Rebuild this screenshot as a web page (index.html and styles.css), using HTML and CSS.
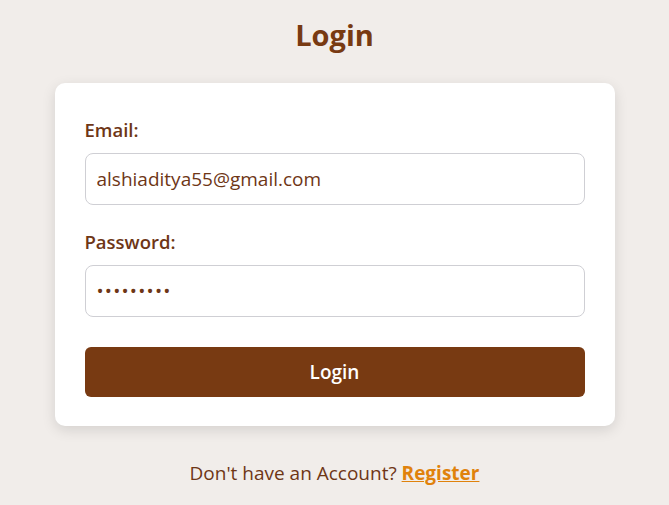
FILE: index.html
```html
<!DOCTYPE html>
<html lang="en">
<head>
<meta charset="utf-8">
<title>Login</title>
<link rel="stylesheet" href="styles.css">
</head>
<body>
<main class="page">
  <h1 class="title">Login</h1>
  <form class="card">
    <label class="label" for="email">Email:</label>
    <input class="field" id="email" type="email" value="alshiaditya55@gmail.com">
    <label class="label label-pw" for="pw">Password:</label>
    <input class="field field-pw" id="pw" type="password" value="123456789">
    <button class="btn" type="button">Login</button>
  </form>
  <p class="footer">Don't have an Account? <a class="link" href="#">Register</a></p>
</main>
</body>
</html>
```
FILE: styles.css
```css
* { box-sizing: border-box; }
html, body { margin: 0; padding: 0; }
body {
  background: #f1edea;
  font-family: "Open Sans", "Noto Sans", sans-serif;
  color: #6e3616;
}
.page {
  display: flex;
  flex-direction: column;
  align-items: center;
}
.title {
  margin: 14px 0 0;
  font-size: 29px;
  line-height: 42px;
  font-weight: 700;
  color: #783a12;
}
.card {
  margin-top: 27px;
  width: 560px;
  background: #fff;
  border-radius: 10px;
  box-shadow: 0 4px 14px rgba(0,0,0,0.12);
  padding: 33px 30px 29px;
  display: flex;
  flex-direction: column;
}
.label {
  font-size: 18.5px;
  line-height: 27px;
  font-weight: 600;
  color: #6e3616;
  margin-bottom: 10px;
}
.label-pw { margin-top: 23px; }
.field {
  height: 52px;
  border: 1px solid #cfcfd4;
  border-radius: 8px;
  padding: 0 11px;
  font-family: inherit;
  font-size: 19px;
  color: #6e3616;
  outline: none;
}
.field-pw { letter-spacing: 1.2px; }
.btn {
  margin-top: 30px;
  height: 50px;
  border: 0;
  border-radius: 6px;
  background: #783a12;
  color: #fff;
  font-family: inherit;
  font-size: 19px;
  font-weight: 600;
}
.footer {
  margin: 34px 0 0;
  font-size: 19px;
  line-height: 26px;
  color: #6e3616;
}
.link {
  color: #e0820c;
  font-weight: 700;
}
```
